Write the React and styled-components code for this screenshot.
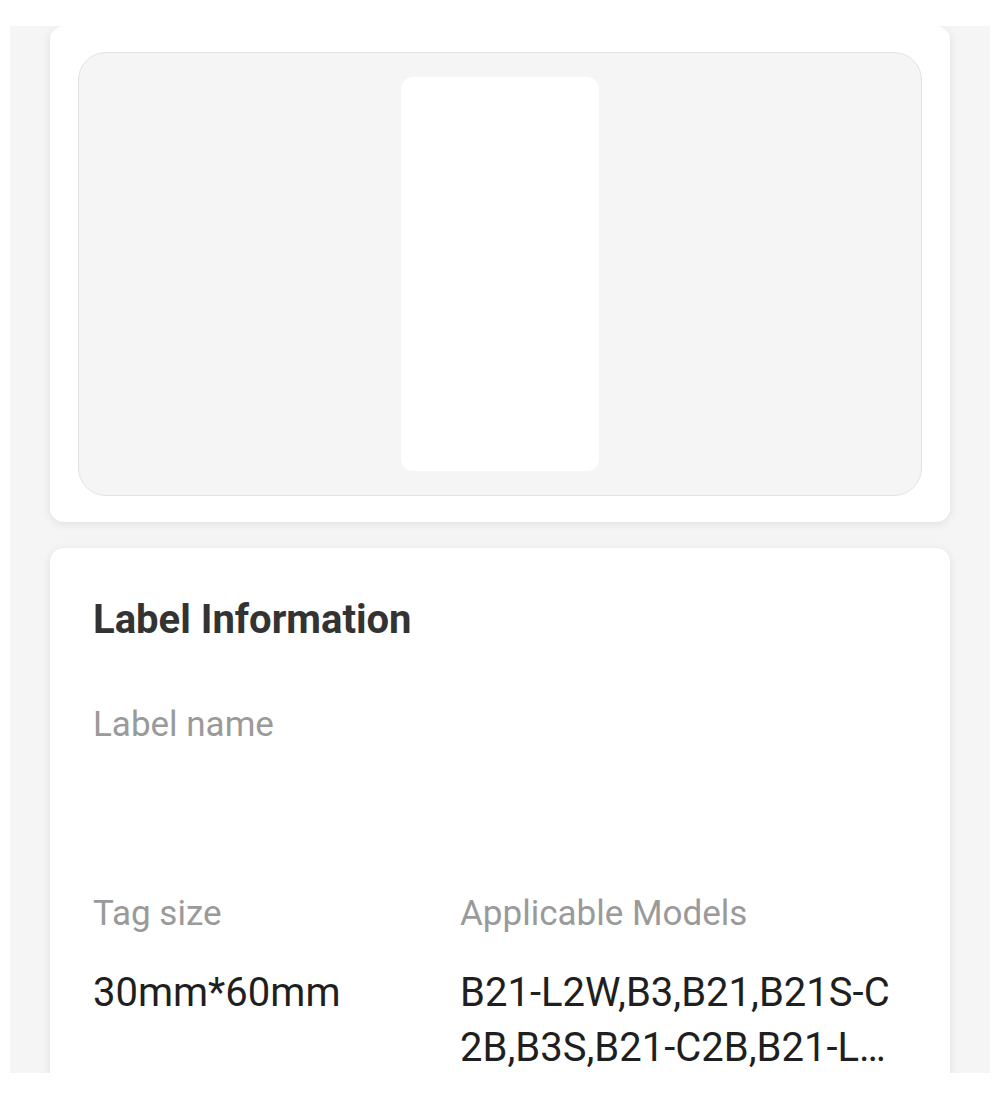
import styled, { createGlobalStyle } from "styled-components";

const GlobalStyle = createGlobalStyle`
  body {
    margin: 0;
    background: #fff;
    font-family: Roboto, "Noto Sans", sans-serif;
  }
`;

const Page = styled.div`
  padding: 26px 10px 27px;
`;

const Screen = styled.div`
  height: 1047px;
  overflow: hidden;
  background: #f5f5f5;
  padding: 0 40px;
  display: flex;
  flex-direction: column;
  gap: 26px;
`;

const Card = styled.div`
  flex-shrink: 0;
  background: #fff;
  border-radius: 14px;
  box-shadow: 0 2px 10px rgba(0, 0, 0, 0.09);
  padding: ${(p) => p.$padding};
`;

const Preview = styled.div`
  height: 442px;
  border: 1px solid #e2e2e2;
  border-radius: 28px;
  background: #f5f5f5;
  display: flex;
  align-items: center;
  justify-content: center;
`;

const LabelSheet = styled.div`
  width: 198px;
  height: 394px;
  background: #fff;
  border-radius: 12px;
`;

const Title = styled.h2`
  margin: 0;
  font-size: 40px;
  line-height: 48px;
  font-weight: 700;
  color: #333;
`;

const FieldGrid = styled.div`
  display: grid;
  grid-template-columns: 367px 1fr;
  margin-top: 60px;
  row-gap: 62px;
`;

const Field = styled.div`
  grid-column: ${(p) => (p.$wide ? "1 / -1" : "auto")};
  display: flex;
  flex-direction: column;
  gap: 30px;
  min-width: 0;
`;

const FieldLabel = styled.div`
  font-size: 35px;
  line-height: 42px;
  color: #9a9a9a;
`;

const FieldValue = styled.div`
  font-size: 40px;
  line-height: 55px;
  min-height: 55px;
  color: #1f1f1f;
  word-break: break-all;
  display: -webkit-box;
  -webkit-box-orient: vertical;
  -webkit-line-clamp: 2;
  overflow: hidden;
`;

const fields = [
  { label: "Label name", value: "", wide: true },
  { label: "Tag size", value: "30mm*60mm" },
  {
    label: "Applicable Models",
    value: "B21-L2W,B3,B21,B21S-C2B,B3S,B21-C2B,B21-L2B,B21 Pro,B1",
  },
];

const App = () => {
  return (
    <>
      <GlobalStyle />
      <Page>
        <Screen>
          <Card $padding="26px 28px 26px">
            <Preview>
              <LabelSheet />
            </Preview>
          </Card>
          <Card $padding="48px 43px 60px">
            <Title>Label Information</Title>
            <FieldGrid>
              {fields.map((f) => (
                <Field key={f.label} $wide={f.wide}>
                  <FieldLabel>{f.label}</FieldLabel>
                  <FieldValue>{f.value}</FieldValue>
                </Field>
              ))}
            </FieldGrid>
          </Card>
        </Screen>
      </Page>
    </>
  );
};

export default App;
